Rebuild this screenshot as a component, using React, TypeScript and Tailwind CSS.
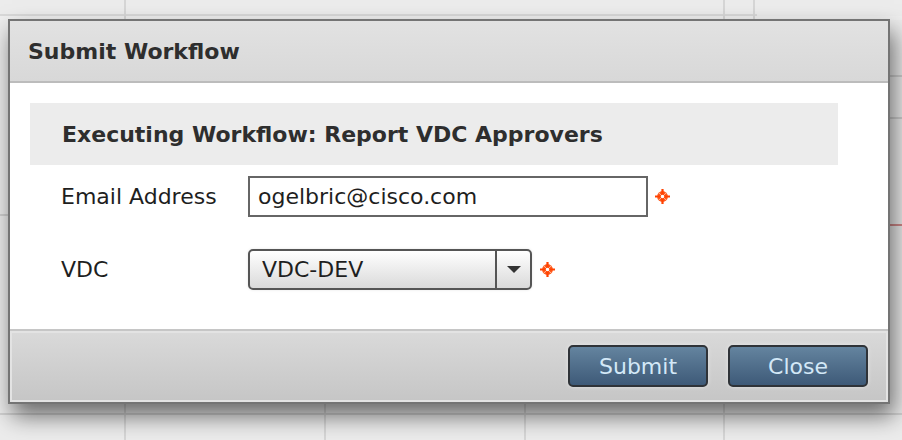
import React from "react";

const font = { fontFamily: '"DejaVu Sans", Verdana, sans-serif' };

function Req() {
  return (
    <svg width="15" height="15" viewBox="-7.5 -7.5 15 15" className="shrink-0">
      <circle cx="0" cy="0" r="5.4" fill="#ff5a1e" />
      <path d="M0 -7.5 V7.5 M-7.5 0 H7.5" stroke="#ff4200" strokeWidth="2.2" />
      <path d="M-3.6 -3.6 L3.6 3.6 M3.6 -3.6 L-3.6 3.6" stroke="#ffb08a" strokeWidth="1" />
      <circle cx="0" cy="0" r="1.7" fill="#fff" />
    </svg>
  );
}

function Btn({ children }: { children: React.ReactNode }) {
  return (
    <button
      className="h-[42px] w-[140px] rounded-[5px] border-2 border-[#2f3338] bg-gradient-to-b from-[#64849f] to-[#3e5a78] text-[22px] text-[#d3e8f7] shadow-[0_0_4px_rgba(255,255,255,0.5)]"
      style={font}
    >
      {children}
    </button>
  );
}

export default function App() {
  return (
    <div className="relative h-[440px] w-[902px] overflow-hidden bg-[#ececec]" style={font}>
      {/* background page grid */}
      <div className="absolute left-0 top-[14px] h-[2px] w-[757px] bg-[#d9d9d9]" />
      <div className="absolute left-0 top-[16px] h-[4px] w-[902px] bg-[#efefef]" />
      <div className="absolute left-[124px] top-0 h-full w-[2px] bg-[#d6d6d6]" />
      <div className="absolute left-[324px] top-[380px] h-[60px] w-[2px] bg-[#d6d6d6]" />
      <div className="absolute left-[524px] top-[380px] h-[60px] w-[2px] bg-[#d6d6d6]" />
      <div className="absolute left-[723px] top-0 h-full w-[2px] bg-[#d6d6d6]" />
      <div className="absolute left-[753px] top-0 h-[20px] w-[2px] bg-[#d6d6d6]" />
      <div className="absolute left-0 top-[214px] h-[2px] w-[10px] bg-[#d0d0d0]" />
      <div className="absolute left-[880px] top-[75px] h-[2px] w-[22px] bg-[#cfcfcf]" />
      <div className="absolute left-[880px] top-[117px] h-[2px] w-[22px] bg-[#cfcfcf]" />
      <div className="absolute left-[880px] top-[224px] h-[2px] w-[22px] bg-[#d08a8a]" />
      <div className="absolute left-0 top-[413px] h-[2px] w-[902px] bg-[#d2d2d2]" />

      {/* dialog */}
      <div className="absolute left-[8px] top-[19px] flex h-[385px] w-[882px] flex-col border-2 border-[#747474] bg-white shadow-[4px_12px_22px_rgba(0,0,0,0.55)]">
        <div className="flex h-[62px] shrink-0 items-center border-b-2 border-[#bcbcbc] bg-gradient-to-b from-[#e2e2e2] to-[#d8d8d8] pl-[18px]">
          <span className="text-[22px] font-bold text-[#2e2e2e]">Submit Workflow</span>
        </div>
        <div className="flex flex-1 flex-col bg-white px-[20px] pt-[20px]">
          <div className="flex h-[62px] w-[808px] items-center bg-[#ececec] pl-[32px]">
            <span className="text-[22px] font-bold text-[#2e2e2e]">Executing Workflow: Report VDC Approvers</span>
          </div>
          <div className="mt-[11px] flex flex-col gap-[32px] pl-[31px]">
            <div className="flex items-center">
              <span className="w-[187px] text-[22px] text-[#1e1e1e]">Email Address</span>
              <div className="flex h-[41px] w-[400px] items-center border-2 border-[#666] bg-white pl-[8px] text-[22px] text-[#1e1e1e]">
                ogelbric@cisco.com
              </div>
              <div className="ml-[7px]">
                <Req />
              </div>
            </div>
            <div className="flex items-center">
              <span className="w-[187px] text-[22px] text-[#1e1e1e]">VDC</span>
              <div className="flex h-[41px] w-[284px] items-stretch rounded-[5px] border-2 border-[#555] bg-gradient-to-b from-white to-[#dadada] shadow-[0_0_3px_rgba(0,0,0,0.1)]">
                <div className="flex flex-1 items-center pl-[12px] text-[22px] text-[#1e1e1e]">VDC-DEV</div>
                <div className="flex w-[35px] items-center justify-center border-l-2 border-[#555]">
                  <svg width="14" height="8" viewBox="0 0 14 8">
                    <path d="M0 0 H14 L7 7 Z" fill="#333" />
                  </svg>
                </div>
              </div>
              <div className="ml-[8px]">
                <Req />
              </div>
            </div>
          </div>
        </div>
        <div className="h-[2px] shrink-0 bg-[#c6c6c6]" />
        <div className="flex h-[71px] shrink-0 items-start justify-end gap-[20px] border-2 border-[#e3e3e3] bg-gradient-to-b from-[#d9d9d9] to-[#c6c6c6] pr-[18px] pt-[12px]">
          <Btn>Submit</Btn>
          <Btn>Close</Btn>
        </div>
      </div>
    </div>
  );
}
